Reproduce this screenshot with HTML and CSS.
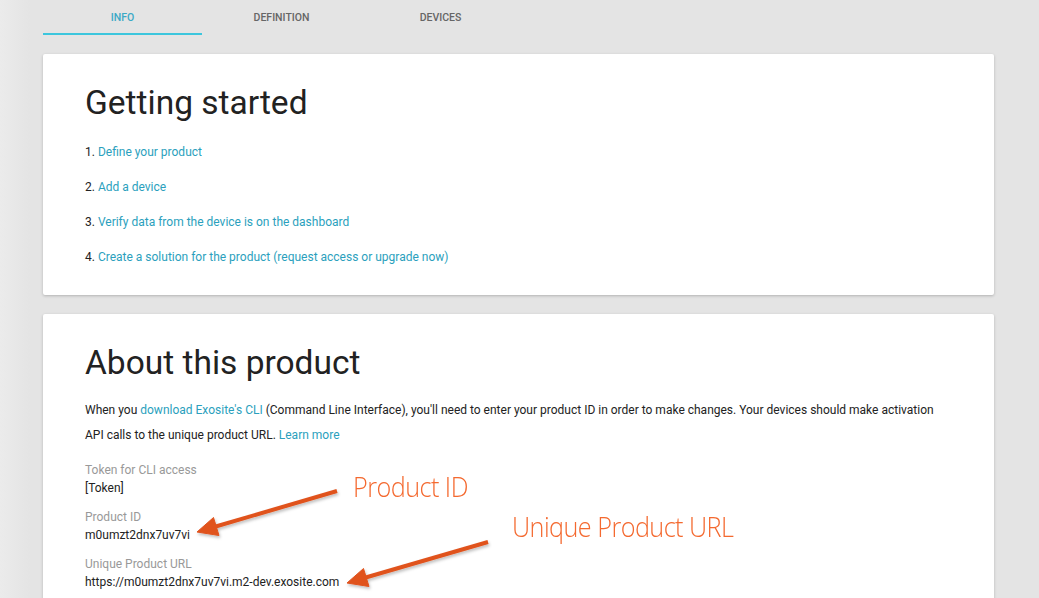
FILE: index.html
```html
<!DOCTYPE html>
<html>
<head>
<meta charset="utf-8">
<link rel="stylesheet" href="styles.css">
</head>
<body>
<div class="page">
  <nav class="tabs">
    <div class="tab active">Info</div>
    <div class="tab">Definition</div>
    <div class="tab">Devices</div>
  </nav>

  <section class="card">
    <h1>Getting started</h1>
    <ol class="steps">
      <li>1. <a href="#">Define your product</a></li>
      <li>2. <a href="#">Add a device</a></li>
      <li>3. <a href="#">Verify data from the device is on the dashboard</a></li>
      <li>4. <a href="#">Create a solution for the product (request access or upgrade now)</a></li>
    </ol>
  </section>

  <section class="card about">
    <h1>About this product</h1>
    <p class="intro">When you <a href="#">download Exosite's CLI</a> (Command Line Interface), you'll need to enter your product ID in order to make changes. Your devices should make activation API calls to the unique product URL. <a href="#">Learn more</a></p>
    <div class="field">
      <div class="label">Token for CLI access</div>
      <div class="value">[Token]</div>
    </div>
    <div class="field">
      <div class="label">Product ID</div>
      <div class="value">m0umzt2dnx7uv7vi</div>
    </div>
    <div class="field">
      <div class="label">Unique Product URL</div>
      <div class="value">https://m0umzt2dnx7uv7vi.m2-dev.exosite.com</div>
    </div>

    <svg class="arrows" width="951" height="300" viewBox="0 0 951 300">
      <defs>
        <filter id="sh" x="-10%" y="-50%" width="120%" height="200%">
          <feDropShadow dx="1" dy="2" stdDeviation="1.5" flood-color="#000" flood-opacity="0.25"/>
        </filter>
      </defs>
      <g filter="url(#sh)" fill="#e0531f" stroke="#e0531f">
        <line x1="294" y1="177" x2="171" y2="213" stroke-width="4"/>
        <polygon points="154,218 170.5,203.5 176,221.5" stroke-width="1"/>
        <line x1="445" y1="228" x2="321" y2="264" stroke-width="4"/>
        <polygon points="304,269 320.5,254.5 326,272.5" stroke-width="1"/>
      </g>
    </svg>
    <div class="note note-id">Product ID</div>
    <div class="note note-url">Unique Product URL</div>
  </section>
</div>
</body>
</html>
```

FILE: styles.css
```css
* { box-sizing: border-box; }

html, body {
  margin: 0;
  padding: 0;
  height: 100%;
  overflow: hidden;
}

body {
  background: linear-gradient(to right, #ebebeb 0px, #e4e4e4 30px, #e4e4e4 100%);
  font-family: Roboto, "Liberation Sans", Arial, sans-serif;
  color: #222;
}

.page {
  padding: 0 45px 0 43px;
}

.tabs {
  display: flex;
  height: 35px;
}

.tab {
  width: 159px;
  text-align: center;
  font-size: 10.5px;
  font-weight: 500;
  text-transform: uppercase;
  color: #666;
  line-height: 35px;
}

.tab.active {
  color: #3ba9c6;
  border-bottom: 2px solid #3cc6dd;
  line-height: 35px;
  height: 35px;
}

.card {
  background: #fff;
  border-radius: 2px;
  box-shadow: 0 1px 3px rgba(0,0,0,0.22);
  padding: 25px 42px 20px;
  margin-top: 19px;
}

.card h1 {
  margin: 0;
  font-size: 33.5px;
  font-weight: 400;
  line-height: 48px;
  color: #222;
}

.steps {
  list-style: none;
  margin: 8px 0 0;
  padding: 0;
}

.steps li {
  font-size: 12px;
  line-height: 35px;
}

a {
  color: #2b9fbd;
  text-decoration: none;
}

.about {
  position: relative;
  height: 320px;
}

.intro {
  margin: 11px 0 0;
  font-size: 12px;
  line-height: 25px;
}

.field {
  margin-top: 13px;
  font-size: 12px;
  line-height: 18px;
}

.field + .field {
  margin-top: 11px;
}

.label {
  color: #999;
}

.value {
  color: #222;
}

.arrows {
  position: absolute;
  left: 0;
  top: 0;
  overflow: visible;
  pointer-events: none;
}

.note {
  position: absolute;
  color: #f4692f;
  font-family: "Open Sans", sans-serif;
  font-weight: 300;
  font-size: 28px;
  line-height: 1;
  white-space: nowrap;
  letter-spacing: -0.6px;
  transform: scaleX(0.9);
  transform-origin: left center;
}

.note-id {
  left: 310px;
  top: 158px;
}

.note-url {
  left: 469px;
  top: 198px;
}
```
